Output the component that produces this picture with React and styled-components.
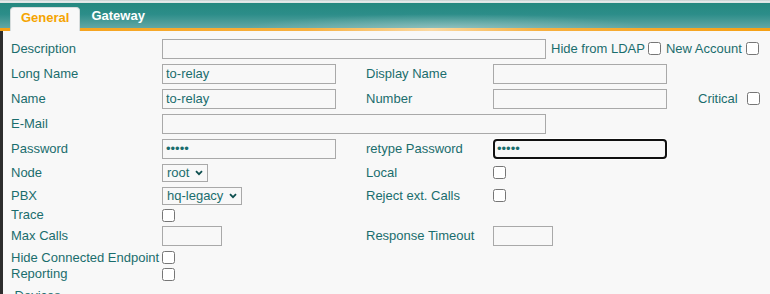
import React from "react";
import styled, { createGlobalStyle } from "styled-components";

const GlobalStyle = createGlobalStyle`
  html, body { margin: 0; padding: 0; background: #f8f8f8; overflow: hidden; }
  body { font-family: "Liberation Sans", Arial, sans-serif; font-size: 13px; color: #1a6d6d; }
  * { box-sizing: border-box; }
`;

const Page = styled.div`
  width: 770px;
  height: 294px;
  display: flex;
  flex-direction: column;
  overflow: hidden;
`;

const TopStrip = styled.div`
  height: 3px;
  flex-shrink: 0;
  background: linear-gradient(to bottom, #c3cdcd 0%, #eaefef 60%, #d6dede 100%);
`;

const TabBar = styled.div`
  height: 28px;
  flex-shrink: 0;
  display: flex;
  align-items: flex-end;
  padding-left: 10px;
  background:
    linear-gradient(to right, #f5a014 0%, #f7b040 40%, #fbd9a2 56%, #f7b040 70%, #f5a014 100%) bottom / 100% 3px no-repeat,
    radial-gradient(ellipse 200px 14px at 58% 100%, rgba(255,255,255,0.28), rgba(255,255,255,0)) top / 100% 25px no-repeat,
    linear-gradient(to bottom, #24887f 0%, #2c8d89 45%, #62a7a4 100%) top / 100% 25px no-repeat;
`;

const Tab = styled.div`
  height: 24px;
  padding: ${(p) => (p.$active ? "2px 10px 0 10px" : "0 10px 0 10px")};
  line-height: 16px;
  font-weight: bold;
  font-size: 13px;
  color: ${(p) => (p.$active ? "#f5a400" : "#ffffff")};
  background: ${(p) => (p.$active ? "#f8f8f8" : "transparent")};
  border-radius: 4px 4px 0 0;
  border: ${(p) => (p.$active ? "1px solid #d6dcdc" : "1px solid transparent")};
  border-bottom: none;
`;

const Body = styled.div`
  flex: none;
  border-left: 3px solid #2d2d2d;
  padding: 5px 0 0 8px;
  display: flex;
  flex-direction: column;
`;

const Row = styled.div`
  height: ${(p) => p.$h}px;
  flex-shrink: 0;
  display: flex;
  align-items: center;
`;

const Label = styled.div`
  width: ${(p) => p.$w || 151}px;
  flex-shrink: 0;
  white-space: nowrap;
  color: #1a6d6d;
  line-height: 16px;
`;

const Cell = styled.div`
  width: ${(p) => p.$w}px;
  flex-shrink: 0;
  display: flex;
  align-items: center;
`;

const TextInput = styled.input`
  width: ${(p) => p.$w || 174}px;
  height: 20px;
  margin: 0;
  padding: 0 3px;
  border: 1px solid #a9a9a9;
  border-radius: 0;
  background: #f8f8f8;
  color: #1a6d6d;
  font-family: "Liberation Sans", Arial, sans-serif;
  font-size: 13px;
  outline: none;
  flex-shrink: 0;
`;

const FocusInput = styled(TextInput)`
  border: 2px solid #111111;
  border-radius: 4px;
  padding: 0 2px;
  box-shadow: 0 0 0 1px #ffffff;
  caret-color: #0d6262;
  &:focus { border: 2px solid #111111; outline: none; }
`;

const Check = styled.input.attrs({ type: "checkbox" })`
  width: 13px;
  height: 13px;
  margin: 0;
  flex-shrink: 0;
`;

const Select = styled.select`
  appearance: none;
  -webkit-appearance: none;
  height: 18px;
  margin: 0;
  padding: 0 17px 0 4px;
  border: 1px solid #a9a9a9;
  border-radius: 0;
  background: #f8f8f8;
  color: #1a6d6d;
  font-family: "Liberation Sans", Arial, sans-serif;
  font-size: 13px;
  line-height: 16px;
`;

const Chevron = styled.svg`
  width: 8px;
  height: 6px;
  margin-left: -13px;
  pointer-events: none;
  flex-shrink: 0;
`;

const Extra = styled.span`
  white-space: nowrap;
  color: #1a6d6d;
  margin-left: ${(p) => p.$ml || 0}px;
  margin-right: ${(p) => p.$mr || 0}px;
`;

function Dropdown({ value }) {
  return (
    <Cell $w={204}>
      <Select defaultValue={value}>
        <option value={value}>{value}</option>
      </Select>
      <Chevron viewBox="0 0 8 6">
        <path d="M1 1.2 L4 4.2 L7 1.2" fill="none" stroke="#0d4f4f" strokeWidth="1.8" />
      </Chevron>
    </Cell>
  );
}

export default function App() {
  return (
    <Page>
      <GlobalStyle />
      <TopStrip />
      <TabBar>
        <Tab $active>General</Tab>
        <Tab>Gateway</Tab>
      </TabBar>
      <Body>
        <Row $h={25}>
          <Label>Description</Label>
          <TextInput $w={384} />
          <Extra $ml={5} $mr={3}>Hide from LDAP</Extra>
          <Check />
          <Extra $ml={5} $mr={4}>New Account</Extra>
          <Check />
        </Row>
        <Row $h={25}>
          <Label>Long Name</Label>
          <Cell $w={204}><TextInput defaultValue="to-relay" /></Cell>
          <Label $w={127}>Display Name</Label>
          <TextInput />
        </Row>
        <Row $h={25}>
          <Label>Name</Label>
          <Cell $w={204}><TextInput defaultValue="to-relay" /></Cell>
          <Label $w={127}>Number</Label>
          <TextInput />
          <Extra $ml={31} $mr={9}>Critical</Extra>
          <Check />
        </Row>
        <Row $h={25}>
          <Label>E-Mail</Label>
          <TextInput $w={384} />
        </Row>
        <Row $h={25}>
          <Label>Password</Label>
          <Cell $w={204}><TextInput type="password" defaultValue="12345" /></Cell>
          <Label $w={127}>retype Password</Label>
          <FocusInput type="password" defaultValue="12345" autoFocus />
        </Row>
        <Row $h={23}>
          <Label>Node</Label>
          <Dropdown value="root" />
          <Label $w={127}>Local</Label>
          <Check />
        </Row>
        <Row $h={23}>
          <Label>PBX</Label>
          <Dropdown value="hq-legacy" />
          <Label $w={127}>Reject ext. Calls</Label>
          <Check />
        </Row>
        <Row $h={16}>
          <Label>Trace</Label>
          <Check />
        </Row>
        <Row $h={26}>
          <Label>Max Calls</Label>
          <Cell $w={204}><TextInput $w={60} /></Cell>
          <Label $w={127}>Response Timeout</Label>
          <TextInput $w={60} />
        </Row>
        <Row $h={17}>
          <Label>Hide Connected Endpoint</Label>
          <Check />
        </Row>
        <Row $h={16}>
          <Label>Reporting</Label>
          <Check />
        </Row>
        <Row $h={28}>
          <Label>&nbsp;Devices</Label>
        </Row>
      </Body>
    </Page>
  );
}
